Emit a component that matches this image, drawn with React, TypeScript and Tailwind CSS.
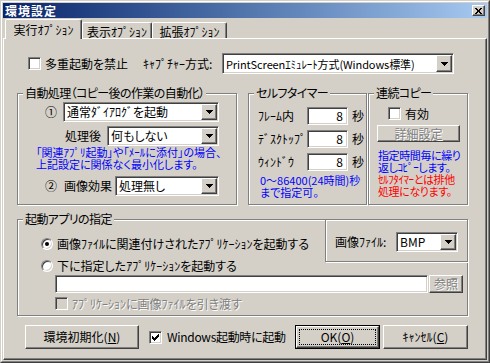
import { ReactNode } from "react";

const raised =
  "border border-t-white border-l-white border-r-[#404040] border-b-[#404040] shadow-[inset_-1px_-1px_0_#808080] bg-[#d4d0c8]";
const sunken =
  "border border-t-[#808080] border-l-[#808080] border-r-white border-b-white shadow-[inset_1px_1px_0_#404040,inset_-1px_-1px_0_#d4d0c8]";
const etched =
  "border border-[#808080] shadow-[inset_1px_1px_0_#ffffff,1px_1px_0_#ffffff]";
const grayText = "text-[#808080] [text-shadow:1px_1px_0_#ffffff]";
const note = "text-[11px] leading-[12px] whitespace-nowrap";

function Arrow() {
  return (
    <svg width="7" height="4" viewBox="0 0 7 4" shapeRendering="crispEdges">
      <path d="M0 0h7v1h-1v1h-1v1h-1v1h-1v-1h-1v-1h-1v-1h-1z" fill="#000" />
    </svg>
  );
}

interface ComboProps {
  text: string;
  className: string;
  textClass?: string;
}

function Combo({ text, className, textClass = "" }: ComboProps) {
  return (
    <div className={`${sunken} bg-white flex items-stretch p-[1px] ${className}`}>
      <span className={`flex-1 flex items-center pl-[2px] whitespace-nowrap overflow-hidden ${textClass}`}>
        {text}
      </span>
      <span className={`${raised} w-[16px] shrink-0 flex items-center justify-center`}>
        <Arrow />
      </span>
    </div>
  );
}

function Check({ checked, disabled }: { checked?: boolean; disabled?: boolean }) {
  return (
    <span
      className={`${sunken} ${disabled ? "bg-[#d4d0c8]" : "bg-white"} w-[13px] h-[13px] shrink-0 flex items-center justify-center`}
    >
      {checked && (
        <svg width="7" height="7" viewBox="0 0 7 7" shapeRendering="crispEdges">
          <path d="M6 0h1v3h-1v1h-1v1h-1v1h-1v1h-1v-1h-1v-1h-1v-3h1v1h1v1h1v-1h1v-1h1z" fill="#000" />
        </svg>
      )}
    </span>
  );
}

function Radio({ checked }: { checked?: boolean }) {
  return (
    <span
      className={`${sunken} bg-white w-[12px] h-[12px] rounded-full shrink-0 flex items-center justify-center`}
    >
      {checked && <span className="w-[4px] h-[4px] rounded-full bg-black" />}
    </span>
  );
}

interface GroupProps {
  title?: string;
  className: string;
  children: ReactNode;
}

function Group({ title, className, children }: GroupProps) {
  return (
    <div className={`${etched} flex flex-col ${className}`}>
      {title && <Legend text={title} />}
      {children}
    </div>
  );
}

function Legend({ text }: { text: string }) {
  return (
    <span className="-mt-[7px] ml-[5px] px-[2px] self-start bg-[#d4d0c8] whitespace-nowrap tracking-[-0.6px]">
      {text}
    </span>
  );
}

function TimerRow({ label }: { label: string }) {
  return (
    <div className="flex items-center h-[18px] ml-[9px]">
      <span className="w-[49px] whitespace-nowrap">{label}</span>
      <span className={`${sunken} bg-white w-[41px] h-[18px] flex items-center justify-end pr-[4px]`}>
        8
      </span>
      <span className="ml-[4px]">秒</span>
    </div>
  );
}

export default function App() {
  return (
    <div className="w-[490px] h-[363px] bg-[#d4d0c8] border border-t-[#d4d0c8] border-l-[#d4d0c8] border-r-[#404040] border-b-[#404040] text-[12px] leading-[12px] text-black font-['Noto_Sans_CJK_JP','Liberation_Sans',sans-serif] [font-feature-settings:'palt'] select-none">
      <div className="w-full h-full border border-t-white border-l-white border-r-[#808080] border-b-[#808080] p-[1px] flex flex-col">
        {/* title bar */}
        <div className="h-[15px] shrink-0 flex items-center bg-gradient-to-r from-[#0a246a] to-[#a6caf0]">
          <span className="ml-[2px] text-white font-bold tracking-[1px]">環境設定</span>
          <span className={`${raised} ml-auto mr-[2px] w-[13px] h-[11px] flex items-center justify-center`}>
            <svg width="7" height="6" viewBox="0 0 7 6" shapeRendering="crispEdges">
              <path d="M0 0h2v1h1v1h1v-1h1v-1h2v1h-1v1h-1v2h1v1h1v1h-2v-1h-1v-1h-1v1h-1v1h-2v-1h1v-1h1v-2h-1v-1h-1z" fill="#000" />
            </svg>
          </span>
        </div>

        {/* tabs */}
        <div className="h-[20px] shrink-0 flex items-end pl-[2px]">
          <span className="relative z-10 -mb-[1px] w-[77px] h-[20px] pt-[4px] flex justify-center bg-[#d4d0c8] border-t border-l border-r border-t-white border-l-white border-r-[#404040] shadow-[inset_-1px_0_0_#808080] rounded-t-[2px]">
            実行ｵﾌﾟｼｮﾝ
          </span>
          <span className="w-[70px] h-[16px] pt-[3px] flex justify-center border-t border-l border-r border-t-white border-l-white border-r-[#404040] shadow-[inset_-1px_0_0_#808080] rounded-t-[2px]">
            表示ｵﾌﾟｼｮﾝ
          </span>
          <span className="w-[75px] h-[16px] pt-[3px] flex justify-center border-t border-l border-r border-t-white border-l-white border-r-[#404040] shadow-[inset_-1px_0_0_#808080] rounded-t-[2px]">
            拡張ｵﾌﾟｼｮﾝ
          </span>
        </div>

        {/* tab panel */}
        <div className="flex-1 flex flex-col pl-[13px] border border-t-white border-l-white border-r-[#404040] border-b-[#404040] shadow-[inset_-1px_-1px_0_#808080]">
          <div className="mt-[14px] h-[21px] flex items-center">
            <div className="w-[126px] flex items-center">
              <span className="ml-[11px]">
                <Check />
              </span>
              <span className="ml-[4px] whitespace-nowrap">多重起動を禁止</span>
            </div>
            <span className="w-[79px] whitespace-nowrap">ｷｬﾌﾟﾁｬｰ方式:</span>
            <Combo
              text="PrintScreenｴﾐｭﾚｰﾄ方式(Windows標準)"
              className="w-[232px] h-[21px]"
              textClass="text-[11px] tracking-[-0.1px]"
            />
          </div>

          <div className="mt-[19px] flex items-start w-[451px]">
            <Group title="自動処理（コピー後の作業の自動化）" className="w-[220px] h-[112px]">
              <div className="mt-[3px] h-[20px] flex items-center ml-[27px]">
                <span className="w-[18px]">①</span>
                <Combo text="通常ﾀﾞｲｱﾛｸﾞを起動" className="w-[156px] h-[20px]" />
              </div>
              <div className="mt-[4px] h-[20px] flex items-center ml-[47px]">
                <span className="w-[42px] whitespace-nowrap">処理後</span>
                <Combo text="何もしない" className="w-[112px] h-[20px]" />
              </div>
              <div className={`ml-[18px] text-[#0000ff] ${note}`}>
                <div>「関連ｱﾌﾟﾘ起動」や「ﾒｰﾙに添付」の場合、</div>
                <div>上記設定に関係なく最小化します。</div>
              </div>
              <div className="mt-[6px] h-[20px] flex items-center ml-[27px]">
                <span className="w-[19px]">②</span>
                <span className="w-[51px] whitespace-nowrap">画像効果</span>
                <Combo text="処理無し" className="w-[104px] h-[20px]" />
              </div>
            </Group>

            <Group title="セルフタイマー" className="ml-[11px] w-[119px] h-[112px]">
              <div className="mt-[8px] flex flex-col gap-[5px]">
                <TimerRow label="ﾌﾚｰﾑ内" />
                <TimerRow label="ﾃﾞｽｸﾄｯﾌﾟ" />
                <TimerRow label="ｳｨﾝﾄﾞｳ" />
              </div>
              <div className={`mt-[3px] ml-[11px] text-[#0000ff] ${note}`}>
                <div>0～86400(24時間)秒</div>
                <div>まで指定可。</div>
              </div>
            </Group>

            <Group title="連続コピー" className="ml-[1px] w-[100px] h-[112px]">
              <div className="mt-[8px] ml-[19px] h-[13px] flex items-center">
                <Check />
                <span className="ml-[4px]">有効</span>
              </div>
              <div className={`${raised} mt-[5px] ml-[8px] w-[83px] h-[17px] flex items-center justify-center ${grayText}`}>
                詳細設定
              </div>
              <div className={`mt-[7px] ml-[9px] tracking-[-0.4px] ${note}`}>
                <div className="text-[#0000ff]">指定時間毎に繰り</div>
                <div className="text-[#0000ff]">返しｺﾋﾟｰします。</div>
                <div className="text-[#ff0000]">ｾﾙﾌﾀｲﾏｰとは排他</div>
                <div className="text-[#ff0000]">処理になります。</div>
              </div>
            </Group>
          </div>

          <Group className="mt-[14px] w-[451px] h-[97px]">
            <div className="flex items-start">
              <div className="flex flex-col">
                <Legend text="起動アプリの指定" />
                <div className="mt-[12px] ml-[23px] h-[13px] flex items-center">
                  <Radio checked />
                  <span className="ml-[4px] whitespace-nowrap">画像ﾌｧｲﾙに関連付けされたｱﾌﾟﾘｹｰｼｮﾝを起動する</span>
                </div>
                <div className="mt-[9px] ml-[23px] h-[13px] flex items-center">
                  <Radio />
                  <span className="ml-[4px] whitespace-nowrap">下に指定したｱﾌﾟﾘｹｰｼｮﾝを起動する</span>
                </div>
              </div>
              <div className={`${etched} ml-auto -mt-[1px] -mr-[1px] w-[143px] h-[43px]`}>
                <div className="mt-[12px] h-[20px] flex items-center">
                  <span className="ml-[9px] w-[61px] whitespace-nowrap">画像ﾌｧｲﾙ:</span>
                  <Combo text="BMP" className="w-[62px] h-[20px]" />
                </div>
              </div>
            </div>
            <div className="mt-[3px] ml-[37px] flex items-center">
              <span className={`${sunken} bg-white w-[373px] h-[18px]`} />
              <span className={`${raised} ml-[1px] w-[34px] h-[18px] flex items-center justify-center ${grayText}`}>
                参照
              </span>
            </div>
            <div className="mt-[4px] ml-[37px] h-[13px] flex items-center">
              <Check disabled />
              <span className={`ml-[4px] whitespace-nowrap ${grayText}`}>ｱﾌﾟﾘｹｰｼｮﾝに画像ﾌｧｲﾙを引き渡す</span>
            </div>
          </Group>

          <div className="mt-[9px] w-[451px] h-[24px] flex items-center">
            <div className={`${raised} ml-[8px] w-[114px] h-[24px] flex items-center justify-center`}>
              環境初期化(<span className="underline">N</span>)
            </div>
            <span className="ml-[10px]">
              <Check checked />
            </span>
            <span className="ml-[5px] whitespace-nowrap tracking-[-0.3px]">Windows起動時に起動</span>
            <div className="ml-auto w-[85px] h-[24px] border border-black flex">
              <div className={`${raised} flex-1 flex p-[2px]`}>
                <div className="flex-1 border border-dotted border-black flex items-center justify-center">
                  OK(<span className="underline">O</span>)
                </div>
              </div>
            </div>
            <div className={`${raised} ml-[3px] w-[85px] h-[24px] flex items-center justify-center`}>
              ｷｬﾝｾﾙ(<span className="underline">C</span>)
            </div>
          </div>
        </div>
      </div>
    </div>
  );
}
